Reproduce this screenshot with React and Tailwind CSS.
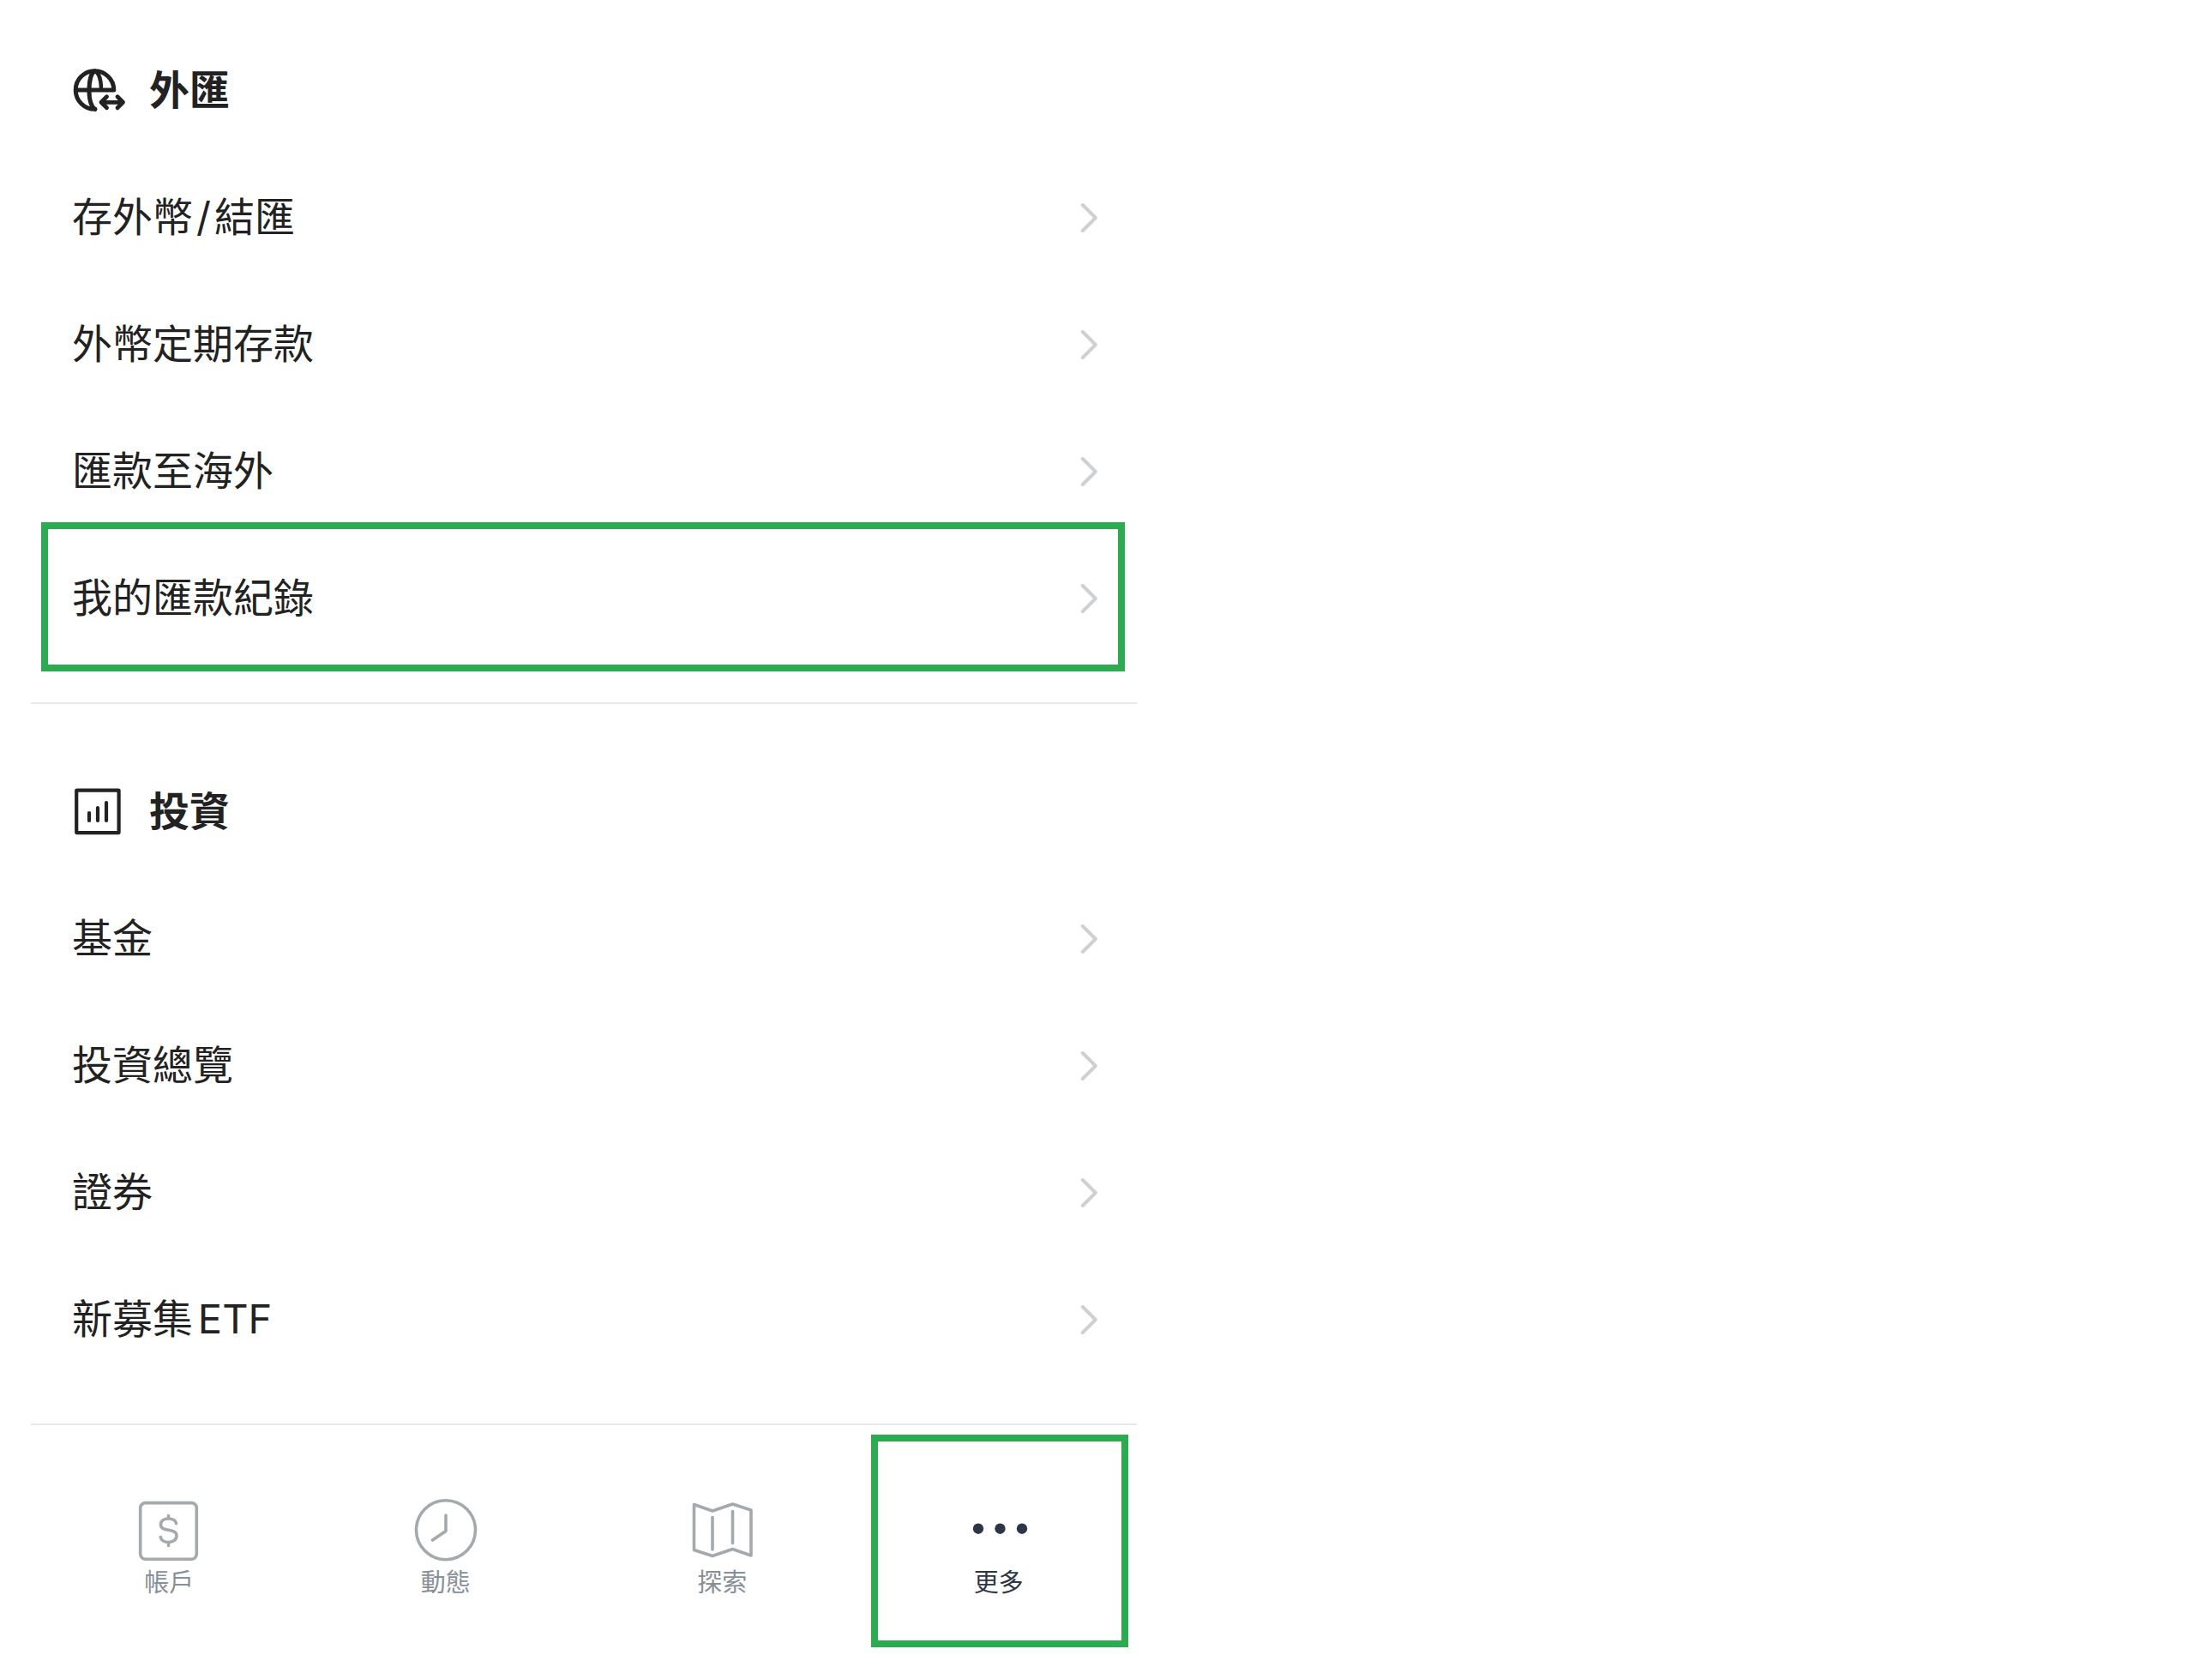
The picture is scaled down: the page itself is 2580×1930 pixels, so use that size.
import React, { Fragment, useState } from 'react';

const sections = [
  {
    title: '外匯',
    icon: GlobeExchangeIcon,
    items: ['存外幣/結匯', '外幣定期存款', '匯款至海外', '我的匯款紀錄'],
  },
  {
    title: '投資',
    icon: ChartIcon,
    items: ['基金', '投資總覽', '證券', '新募集ETF'],
  },
];

const tabs = [
  { label: '帳戶', icon: AccountIcon },
  { label: '動態', icon: ClockIcon },
  { label: '探索', icon: MapIcon },
  { label: '更多', icon: MoreIcon },
];

const highlightedItem = '我的匯款紀錄';

function GlobeExchangeIcon() {
  return (
    <svg className="size-16" viewBox="0 0 64 64" fill="none" stroke="currentColor" strokeWidth="5" strokeLinecap="round" strokeLinejoin="round" aria-hidden="true">
      <path d="M26.8 53.3A22.3 22.3 0 1 1 48.800 31H4.500" />
      <path d="M26.500 9C22.500 11 20 20 20 31.500C20 43 22 50 26.800 53.300" />
      <path d="M26.500 9C31.500 11 34 20 34 30" strokeWidth="4.400" />
      <path d="M34 45.300H59.500M40.500 38.800L34 45.300L40.500 51.800M53 38.800L59.500 45.300L53 51.800" strokeWidth="4.800" />
    </svg>
  );
}

function ChartIcon() {
  return (
    <svg className="size-16" viewBox="0 0 64 64" fill="none" stroke="currentColor" strokeWidth="4.200" strokeLinecap="round" strokeLinejoin="round" aria-hidden="true">
      <rect x="5.200" y="6.700" width="49.400" height="49.400" rx="0.500" />
      <path d="M20 33V42M30 27V42M40 21V42" />
    </svg>
  );
}

function ChevronIcon() {
  return (
    <svg className="h-10 w-6 text-[#cfd0d2]" viewBox="0 0 24 40" fill="none" stroke="currentColor" strokeWidth="4" strokeLinecap="round" strokeLinejoin="round" aria-hidden="true">
      <path d="M4.800 5L19.800 20L4.800 35" />
    </svg>
  );
}

function AccountIcon() {
  return (
    <svg className="size-20" viewBox="0 0 80 80" fill="none" stroke="currentColor" strokeWidth="3.600" strokeLinecap="round" strokeLinejoin="round" aria-hidden="true">
      <rect x="6.700" y="6.600" width="65.600" height="65.600" rx="6" />
      <path d="M48.500 30.500C48 27.500 44.500 25 39.500 25C34 25 30.500 28 30.500 32C30.500 41.500 49 35 49 45C49 49.500 45 52.500 39.500 52.500C34.500 52.500 31 50 30.300 46.500M39.500 21.500V25M39.500 52.500V56.500" />
    </svg>
  );
}

function ClockIcon() {
  return (
    <svg className="size-20" viewBox="0 0 80 80" fill="none" stroke="currentColor" strokeWidth="3.600" strokeLinecap="round" strokeLinejoin="round" aria-hidden="true">
      <circle cx="40" cy="38.200" r="34.500" />
      <path d="M40 21V39.500L24.500 50" />
    </svg>
  );
}

function MapIcon() {
  return (
    <svg className="size-20" viewBox="0 0 80 80" fill="none" stroke="currentColor" strokeWidth="3.600" strokeLinecap="round" strokeLinejoin="round" aria-hidden="true">
      <path d="M7.500 8.500L29 16L52.500 8L74 15V68L52.500 60.500L29 68.500L7.500 61.500Z" />
      <path d="M29 23.500V61M52.500 16.500V53.500" />
    </svg>
  );
}

function MoreIcon() {
  return (
    <svg className="size-20" viewBox="0 0 80 80" fill="currentColor" aria-hidden="true">
      <circle cx="16" cy="36.700" r="6.200" />
      <circle cx="41.500" cy="36.700" r="6.200" />
      <circle cx="67" cy="36.700" r="6.200" />
    </svg>
  );
}

function MenuRow({ label, highlighted }) {
  return (
    <li className="relative">
      <a href="#" className="flex h-37 items-center justify-between pl-12 pr-11 text-[47px] leading-none">
        <span className="pb-1">
          {label.split('/').map((part, i) => (
            <Fragment key={part}>
              {i > 0 && <span className="mx-1">/</span>}
              {part}
            </Fragment>
          ))}
        </span>
        <ChevronIcon />
      </a>
      {highlighted && (
        <div className="pointer-events-none absolute -bottom-[11px] -top-[15px] left-3 right-3.5 border-8 border-[#2bac51]" />
      )}
    </li>
  );
}

function MenuSection({ title, icon: Icon, items }) {
  return (
    <section className="border-b-2 border-[#e9e9e9] pb-[47px] pt-13 first:pt-8">
      <h2 className="flex h-37 items-center gap-[26px] pl-12 text-[47px] font-bold leading-none">
        <Icon />
        <span className="pb-1">{title}</span>
      </h2>
      <ul>
        {items.map((item) => (
          <MenuRow key={item} label={item} highlighted={item === highlightedItem} />
        ))}
      </ul>
    </section>
  );
}

const App = () => {
  const [active, setActive] = useState('更多');

  return (
    <div className="min-h-screen bg-white font-['Inter','Noto_Sans_CJK_TC',sans-serif] text-[#222222] [text-autospace:normal]" lang="zh-Hant">
      <div className="ml-9 w-1/2">
        <main>
          {sections.map((section) => (
            <MenuSection key={section.title} {...section} />
          ))}
        </main>

        <nav className="grid grid-cols-4">
          {tabs.map(({ label, icon: Icon }) => (
            <button
              key={label}
              type="button"
              onClick={() => setActive(label)}
              className={`relative flex flex-col items-center pb-16 pt-21 ${active === label ? 'text-[#2d3548]' : 'text-[#a4a9ae]'}`}
            >
              <Icon />
              <span className={`text-[29px] leading-10 ${active === label ? 'text-[#2d3548]' : 'text-[#879098]'}`}>{label}</span>
              {active === label && (
                <span className="pointer-events-none absolute bottom-[9px] left-3 right-2.5 top-[11px] border-8 border-[#2bac51]" />
              )}
            </button>
          ))}
        </nav>
      </div>
    </div>
  );
};

export default App;
